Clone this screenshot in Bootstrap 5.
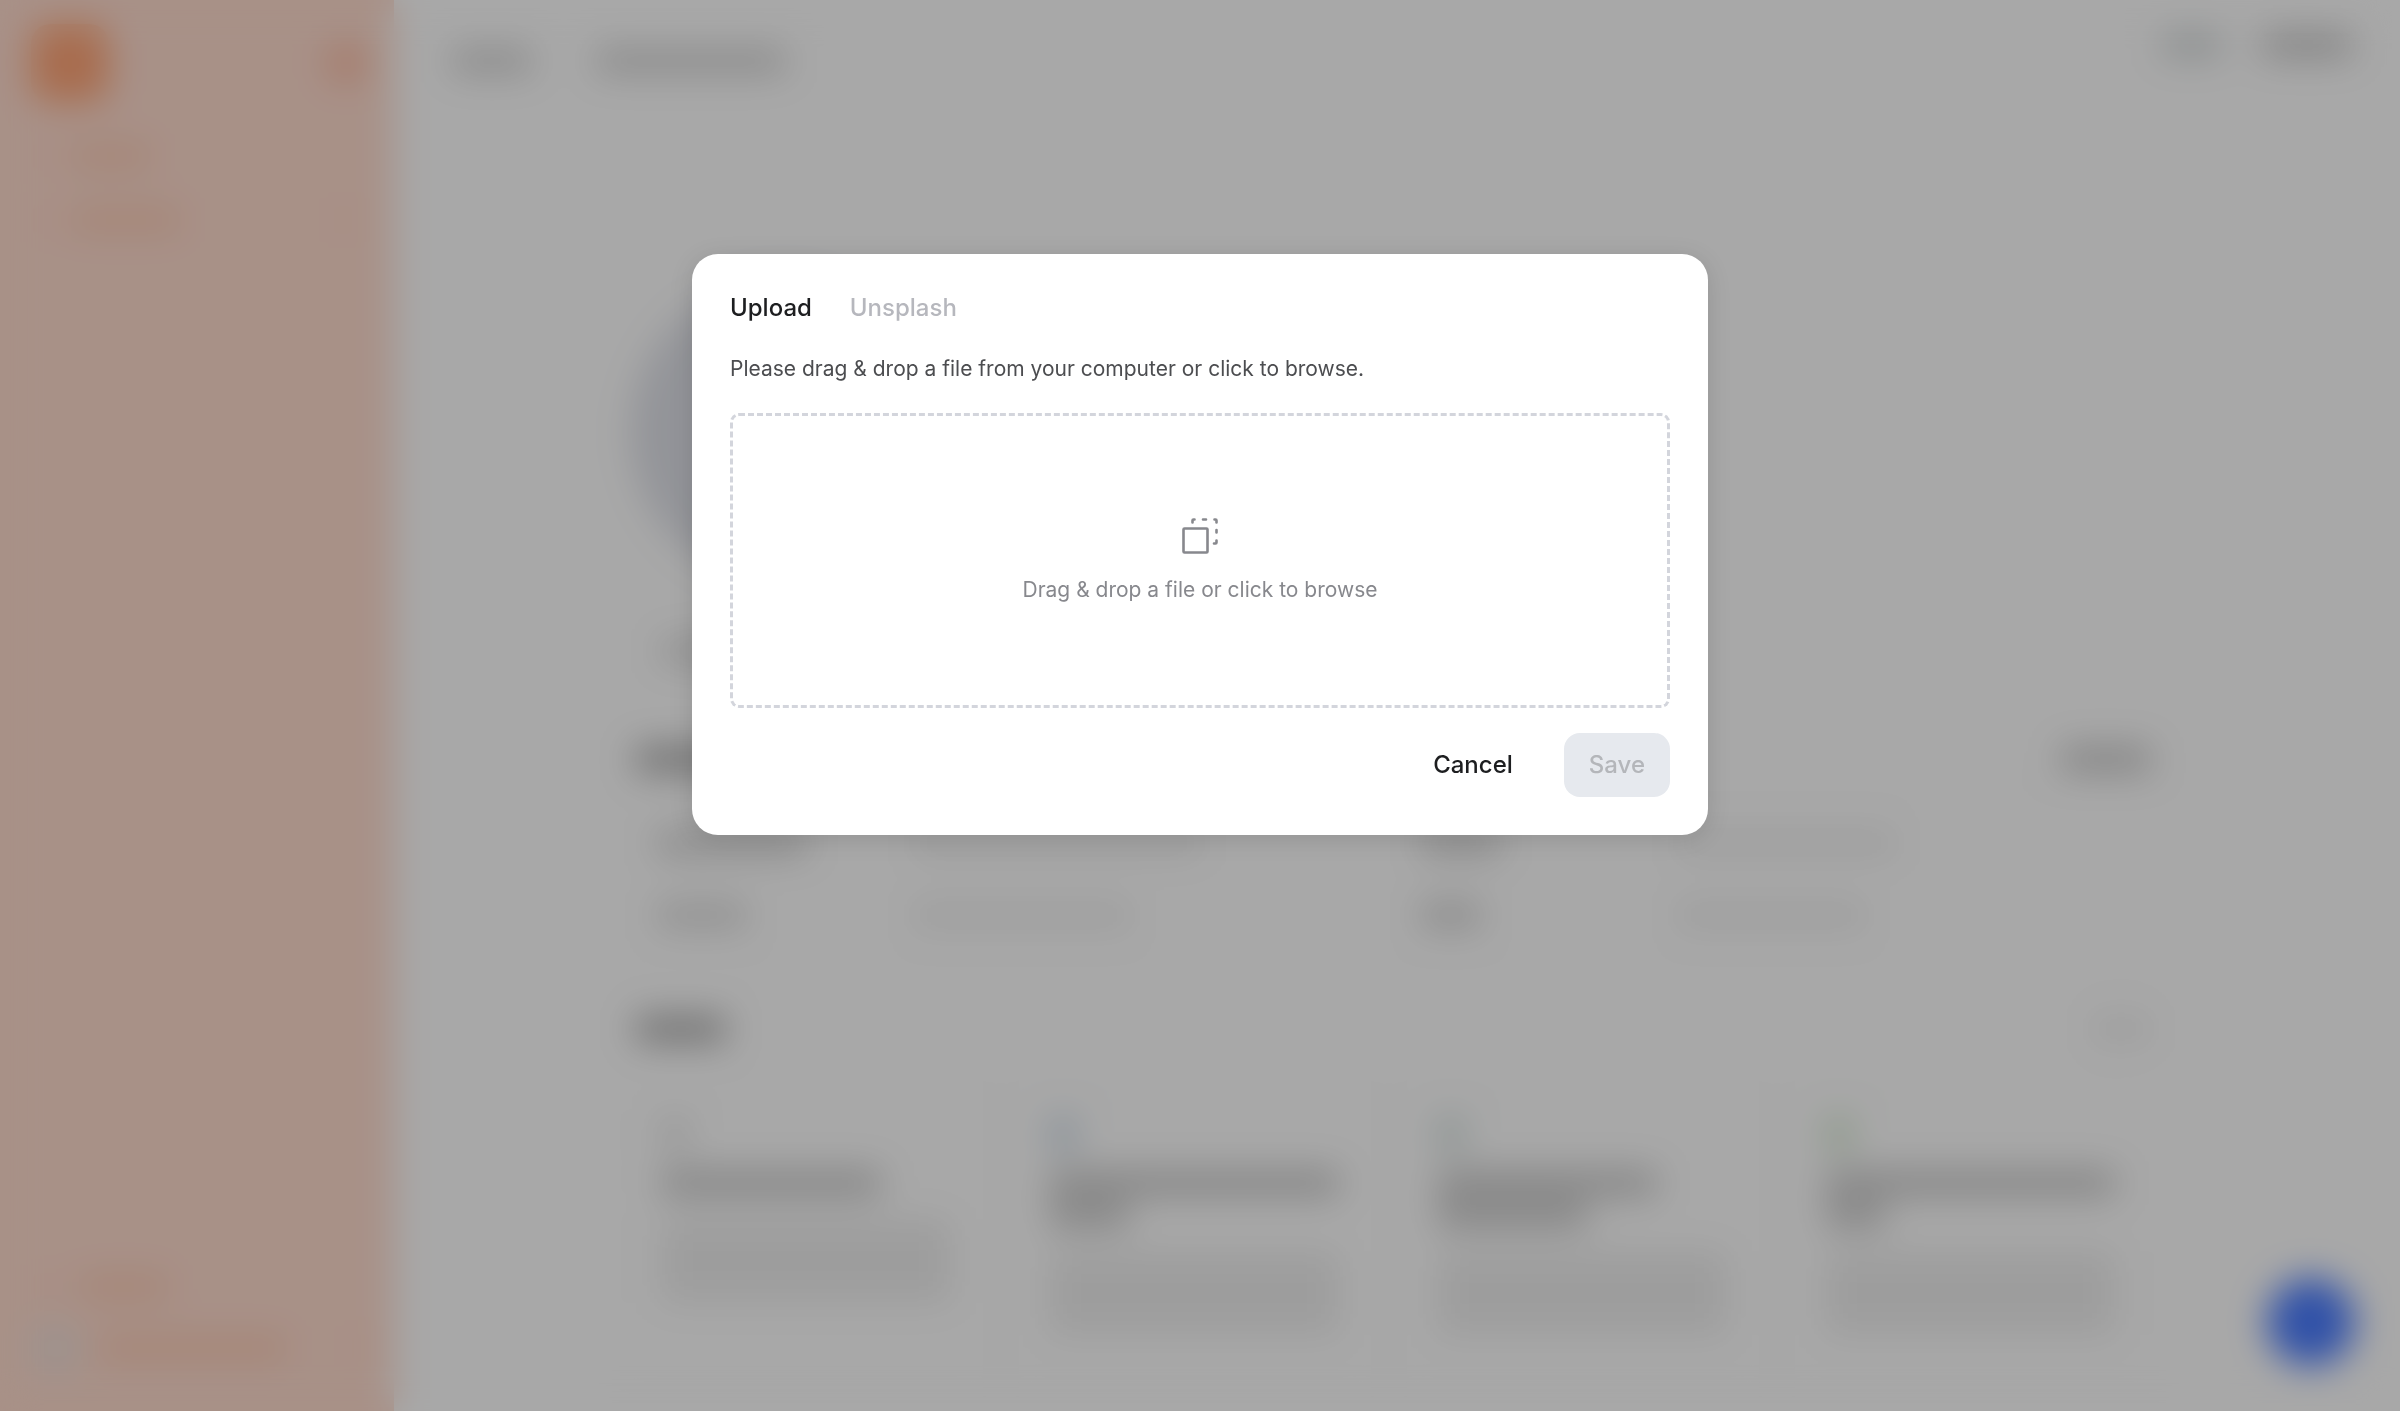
<!DOCTYPE html>
<html lang="en">
<head>
<meta charset="utf-8">
<meta name="viewport" content="width=device-width, initial-scale=1">
<title>Upload</title>
<link rel="stylesheet" href="https://cdn.jsdelivr.net/npm/bootstrap@5.3.0/dist/css/bootstrap.min.css">
<style>
  body { font-family: Inter, "Liberation Sans", sans-serif; color: #1d1e20; background: #fff; }

  /* Page behind the dialog: placeholder blocks */
  .bar { height: 24px; border-radius: 6px; background: #d2d2d2; flex: none; }
  .bar-60 { width: 60px; } .bar-80 { width: 80px; } .bar-90 { width: 90px; }
  .bar-110 { width: 110px; } .bar-150 { width: 150px; } .bar-190 { width: 190px; }
  .bar-220 { width: 220px; } .bar-290 { width: 290px; }
  .tone-value { background: #eee; }
  .tone-label { background: #dadada; }
  .tone-title { background: #c6c6c6; }
  .tone-heading { background: #a4a4a4; }
  .side { width: 394px; background: #ffdcce; padding: 24px 22px 38px 31px; }
  .side .bar { background: #fccab2; }
  .side .glyph { width: 24px; height: 24px; border-radius: 6px; background: #ffd5c6; }
  .side-nav { gap: 40px; padding-top: 42px; }
  .logo { width: 78px; height: 78px; border-radius: 20px; background: #ffa577; }
  .collapse-btn { width: 36px; height: 36px; margin-right: 8px; border-radius: 8px; background: #fcb99f; }
  .avatar { width: 50px; height: 50px; border-radius: 50%; background: #eddfd9; }
  .topbar { padding: 33px 48px 0 58px; height: 92px; }
  .topbar .chip { background: #d2d7d8; }
  .content { max-width: 1568px; padding-top: 187px; }
  .portrait { width: 306px; height: 306px; border-radius: 50%; background: #dfe1e8; margin-left: 18px; }
  .caption-bar { margin: 54px 0 60px 48px; }
  .head-row { padding: 0 30px 0 23px; }
  .panel { border: 2px solid #f6f6f6; border-radius: 16px; padding: 42px 42px 40px; row-gap: 48px; }
  .pair { width: 255px; }
  .page-card { border: 2px solid #f6f6f6; border-radius: 16px; padding: 26px 42px; height: 296px; }
  .emblem { width: 28px; height: 34px; border-radius: 8px; margin-bottom: 20px; }
  .summary { height: 84px; width: 290px; background: #efefef; border-radius: 6px; margin-top: 24px; }
  .chat { width: 88px; height: 88px; right: 45px; bottom: 45px; background: #4a7cff; }

  /* Dialog */
  .veil { background: rgba(0,0,0,.34); backdrop-filter: blur(18px); z-index: 1050; }
  .modal-dialog { max-width: 1016px; margin-top: 254px; }
  .modal-content { border: 0; border-radius: 26px; padding: 38px; box-shadow: 0 4px 24px rgba(0,0,0,.12); }
  .tabs { gap: 38px; }
  .tab { border: 0; padding: 0; background: none; font-size: 24px; line-height: 32px; font-weight: 500; color: #b6b7bd; }
  .tab.active { color: #1d1e20; }
  .hint { font-size: 21px; line-height: 28px; color: #4c4d50; margin: 31px 0 30px; }
  .drop { height: 295px; border: 3px dashed #d3d5dc; border-radius: 9px; color: #87888d; font-size: 21px; line-height: 28px; gap: 22px; cursor: pointer; }
  .actions { gap: 16px; margin-top: 25px; }
  .act { height: 64px; border-radius: 16px; font-size: 24px; line-height: 32px; font-weight: 500; border: 0; }
  .act-cancel { padding: 0 35px; color: #1d1e20; }
  .act-save, .act-save:disabled { padding: 0 25px; background: #e6e9ee; color: #b4b6ba; opacity: 1; }
</style>
<script src="https://cdn.jsdelivr.net/npm/bootstrap@5.3.0/dist/js/bootstrap.bundle.min.js"></script>
</head>
<body>
<div class="d-flex vh-100 overflow-hidden" aria-hidden="true">
  <aside class="side d-flex flex-column flex-shrink-0">
    <div class="d-flex justify-content-between align-items-center">
      <div class="logo"></div>
      <div class="collapse-btn"></div>
    </div>
    <div class="side-nav d-flex flex-column">
      <div class="d-flex align-items-center gap-3"><div class="glyph"></div><div class="bar bar-80"></div></div>
      <div class="d-flex align-items-center gap-3"><div class="glyph"></div><div class="bar bar-110"></div><div class="glyph ms-auto me-3"></div></div>
    </div>
    <div class="mt-auto d-flex flex-column gap-4">
      <div class="d-flex align-items-center gap-4"><div class="glyph"></div><div class="bar bar-90"></div></div>
      <div class="d-flex align-items-center gap-3"><div class="avatar"></div><div class="bar bar-190"></div><div class="glyph ms-auto"></div></div>
    </div>
  </aside>

  <main class="flex-grow-1">
    <div class="topbar d-flex">
      <div class="d-flex mt-3 pe-5"><div class="bar bar-80"></div></div>
      <div class="d-flex mt-3 ps-3"><div class="bar bar-190"></div></div>
      <div class="d-flex ms-auto gap-4">
        <div class="bar bar-60 chip"></div>
        <div class="bar bar-90 tone-title ms-3"></div>
      </div>
    </div>
    <div class="content mx-auto">
      <div class="portrait"></div>
      <div class="bar bar-150 tone-label caption-bar"></div>
      <div class="head-row d-flex justify-content-between pt-4 pb-3 mt-3">
        <div class="bar bar-190 tone-heading"></div><div class="bar bar-90 tone-title"></div>
      </div>
      <div class="panel row mx-0">
        <div class="col-6 d-flex px-0"><div class="pair"><div class="bar bar-150"></div></div><div class="bar bar-290 tone-value"></div></div>
        <div class="col-6 d-flex px-0"><div class="pair ms-4"><div class="bar bar-80"></div></div><div class="bar bar-220 tone-value"></div></div>
        <div class="col-6 d-flex px-0"><div class="pair"><div class="bar bar-90 tone-label"></div></div><div class="bar bar-220 tone-value"></div></div>
        <div class="col-6 d-flex px-0"><div class="pair ms-4"><div class="bar bar-60"></div></div><div class="bar bar-190 tone-value"></div></div>
      </div>
      <div class="head-row d-flex justify-content-between pt-5 pb-5">
        <div class="bar bar-90 tone-heading"></div><div class="bar bar-60 tone-value"></div>
      </div>
      <div class="row row-cols-4 gx-2 mx-0 pe-3">
        <div class="col"><div class="page-card"><div class="emblem" style="background:#e4e4e4"></div><div class="bar bar-220 tone-title"></div><div class="summary"></div></div></div>
        <div class="col"><div class="page-card"><div class="emblem" style="background:#cddae6"></div><div class="bar bar-290 tone-title"></div><div class="bar bar-80 tone-title mt-2"></div><div class="summary"></div></div></div>
        <div class="col"><div class="page-card"><div class="emblem" style="background:#d2dedc"></div><div class="bar bar-220 tone-title"></div><div class="bar bar-150 tone-title mt-2"></div><div class="summary"></div></div></div>
        <div class="col"><div class="page-card"><div class="emblem" style="background:#d2e6cd"></div><div class="bar bar-290 tone-title"></div><div class="bar bar-60 tone-title mt-2"></div><div class="summary"></div></div></div>
      </div>
    </div>
  </main>
  <div class="chat position-fixed rounded-circle"></div>
</div>

<div class="veil position-fixed top-0 start-0 w-100 h-100"></div>

<div class="modal d-block" tabindex="-1" role="dialog" aria-modal="true" aria-label="Upload">
  <div class="modal-dialog">
    <div class="modal-content">
      <div class="tabs d-flex" role="tablist">
        <button type="button" class="tab active" role="tab" aria-selected="true">Upload</button>
        <button type="button" class="tab" role="tab" aria-selected="false">Unsplash</button>
      </div>
      <p class="hint">Please drag &amp; drop a file from your computer or click to browse.</p>
      <label class="drop d-flex flex-column align-items-center justify-content-center" for="file">
        <svg width="36" height="36" viewBox="0 0 36 36" fill="none" stroke="currentColor" stroke-width="2.6" stroke-linecap="round" stroke-linejoin="round" aria-hidden="true">
          <rect x="1.5" y="10.500" width="24" height="24" rx="1"/>
          <path d="M10.500 4.500V2.500a1 1 0 0 1 1-1H12.500M21 1.500h3M32.500 1.500h1a1 1 0 0 1 1 1V4.500M34.500 12v2.500M34.500 22.500v2a1 1 0 0 1-1 1H32"/>
        </svg>
        <span>Drag &amp; drop a file or click to browse</span>
        <input type="file" id="file" class="visually-hidden">
      </label>
      <div class="actions d-flex justify-content-end">
        <button type="button" class="btn act act-cancel">Cancel</button>
        <button type="button" class="btn act act-save" disabled>Save</button>
      </div>
    </div>
  </div>
</div>
</body>
</html>
